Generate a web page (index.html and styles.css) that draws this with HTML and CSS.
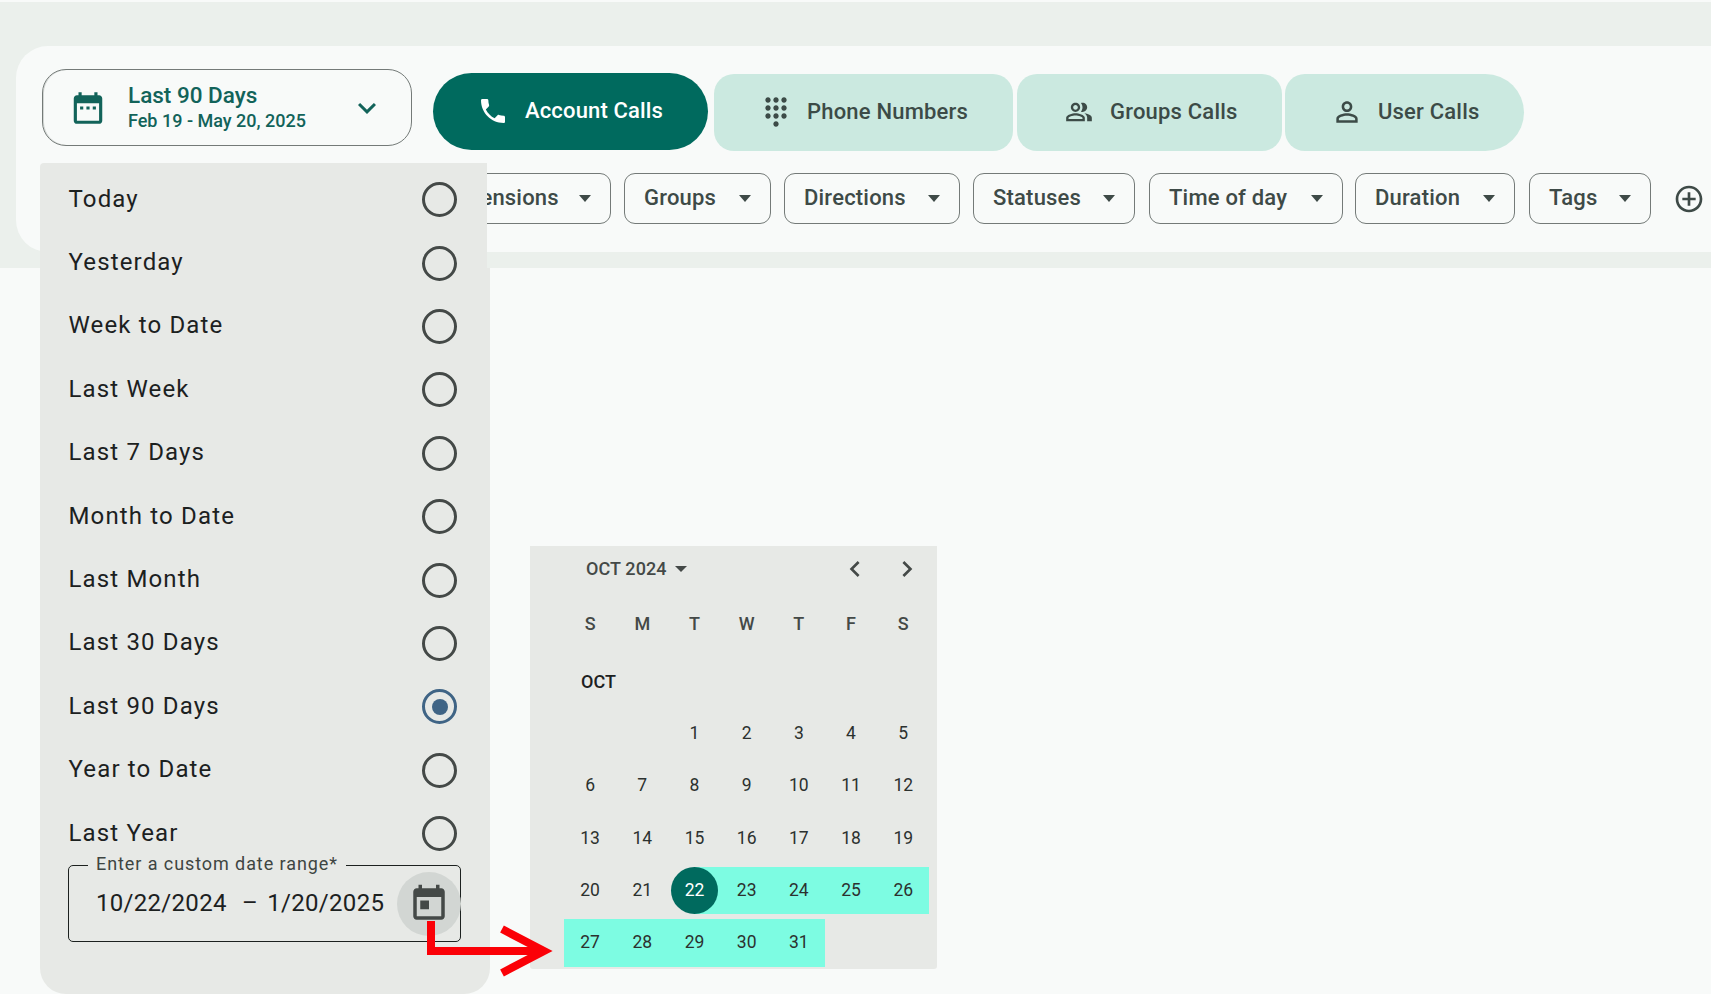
FILE: index.html
```html
<!DOCTYPE html>
<html lang="en">
<head>
    <meta charset="UTF-8">
    <meta name="viewport" content="width=device-width, initial-scale=1.0">
    <title>Account Calls</title>
    <link rel="stylesheet" href="styles.css">
</head>
<body>
    <div class="band">
        <div class="panel">
            <div class="top-row">
                <button class="range-select">
                    <svg class="range-icon" viewBox="0 0 24 24"><path d="M9 11H7v2h2v-2zm4 0h-2v2h2v-2zm4 0h-2v2h2v-2zm2-7h-1V2h-2v2H8V2H6v2H5c-1.11 0-1.99.9-1.99 2L3 20c0 1.1.89 2 2 2h14c1.1 0 2-.9 2-2V6c0-1.1-.9-2-2-2zm0 16H5V9h14v11z"/></svg>
                    <span class="range-text">
                        <span class="range-name">Last 90 Days</span>
                        <span class="range-dates">Feb 19 - May 20, 2025</span>
                    </span>
                    <svg class="range-chevron" viewBox="0 0 24 24"><path d="M16.59 8.59 12 13.17 7.41 8.59 6 10l6 6 6-6z"/></svg>
                </button>
                <div class="tabs">
                    <button class="tab tab-active">
                        <svg viewBox="0 0 24 24"><path d="M6.62 10.79c1.44 2.83 3.76 5.14 6.59 6.59l2.2-2.2c.27-.27.67-.36 1.02-.24 1.12.37 2.33.57 3.57.57.55 0 1 .45 1 1V20c0 .55-.45 1-1 1-9.39 0-17-7.61-17-17 0-.55.45-1 1-1h3.5c.55 0 1 .45 1 1 0 1.25.2 2.45.57 3.57.11.35.03.74-.25 1.02l-2.2 2.2z"/></svg>
                        Account Calls
                    </button>
                    <button class="tab tab-phone">
                        <svg viewBox="0 0 24 24"><path d="M12 19c-1.1 0-2 .9-2 2s.9 2 2 2 2-.9 2-2-.9-2-2-2zM6 1c-1.1 0-2 .9-2 2s.9 2 2 2 2-.9 2-2-.9-2-2-2zm0 6c-1.1 0-2 .9-2 2s.9 2 2 2 2-.9 2-2-.9-2-2-2zm0 6c-1.1 0-2 .9-2 2s.9 2 2 2 2-.9 2-2-.9-2-2-2zm12-8c1.1 0 2-.9 2-2s-.9-2-2-2-2 .9-2 2 .9 2 2 2zm-6 8c-1.1 0-2 .9-2 2s.9 2 2 2 2-.9 2-2-.9-2-2-2zm6 0c-1.1 0-2 .9-2 2s.9 2 2 2 2-.9 2-2-.9-2-2-2zm0-6c-1.1 0-2 .9-2 2s.9 2 2 2 2-.9 2-2-.9-2-2-2zm-6 0c-1.1 0-2 .9-2 2s.9 2 2 2 2-.9 2-2-.9-2-2-2zm0-6c-1.1 0-2 .9-2 2s.9 2 2 2 2-.9 2-2-.9-2-2-2z"/></svg>
                        Phone Numbers
                    </button>
                    <button class="tab tab-groups">
                        <svg viewBox="0 0 24 24"><path d="M16.67 13.13C18.04 14.06 19 15.32 19 17v3h4v-3c0-2.18-3.57-3.47-6.33-3.87zM15 12c2.21 0 4-1.79 4-4s-1.79-4-4-4c-.47 0-.91.1-1.33.24C14.5 5.27 15 6.58 15 8s-.5 2.73-1.33 3.76c.42.14.86.24 1.33.24zM9 12c2.21 0 4-1.79 4-4s-1.79-4-4-4-4 1.79-4 4 1.79 4 4 4zm0-6c1.1 0 2 .9 2 2s-.9 2-2 2-2-.9-2-2 .9-2 2-2zM9 13c-2.67 0-8 1.34-8 4v3h16v-3c0-2.66-5.33-4-8-4zm6 5H3v-.99C3.2 16.29 6.3 15 9 15s5.8 1.29 6 2v1z"/></svg>
                        Groups Calls
                    </button>
                    <button class="tab tab-user">
                        <svg viewBox="0 0 24 24"><path d="M12 5.9c1.16 0 2.1.94 2.1 2.1s-.94 2.1-2.1 2.1S9.9 9.16 9.9 8s.94-2.1 2.1-2.1m0 9c2.97 0 6.1 1.46 6.1 2.1v1.1H5.9V17c0-.64 3.13-2.1 6.1-2.1M12 4C9.79 4 8 5.79 8 8s1.79 4 4 4 4-1.79 4-4-1.79-4-4-4zm0 9c-2.67 0-8 1.34-8 4v3h16v-3c0-2.66-5.33-4-8-4z"/></svg>
                        User Calls
                    </button>
                </div>
            </div>
            <div class="filters">
                <button class="chip chip-ext">Extensions<i></i></button>
                <button class="chip chip-groups">Groups<i></i></button>
                <button class="chip chip-dir">Directions<i></i></button>
                <button class="chip chip-status">Statuses<i></i></button>
                <button class="chip chip-time">Time of day<i></i></button>
                <button class="chip chip-dur">Duration<i></i></button>
                <button class="chip chip-tags">Tags<i></i></button>
                <svg class="add-filter" viewBox="0 0 24 24"><path d="M13 7h-2v4H7v2h4v4h2v-4h4v-2h-4V7zm-1-5C6.48 2 2 6.48 2 12s4.48 10 10 10 10-4.48 10-10S17.52 2 12 2zm0 18c-4.41 0-8-3.59-8-8s3.59-8 8-8 8 3.59 8 8-3.59 8-8 8z"/></svg>
            </div>
        </div>
    </div>

    <div class="range-menu">
        <ul class="range-list">
            <li>Today<span class="radio"></span></li>
            <li>Yesterday<span class="radio"></span></li>
            <li>Week to Date<span class="radio"></span></li>
            <li>Last Week<span class="radio"></span></li>
            <li>Last 7 Days<span class="radio"></span></li>
            <li>Month to Date<span class="radio"></span></li>
            <li>Last Month<span class="radio"></span></li>
            <li>Last 30 Days<span class="radio"></span></li>
            <li>Last 90 Days<span class="radio radio-on"></span></li>
            <li>Year to Date<span class="radio"></span></li>
            <li>Last Year<span class="radio"></span></li>
        </ul>
        <div class="date-field">
            <span class="date-label">Enter a custom date range*</span>
            <span class="date-value">10/22/2024 <span class="date-sep">–</span> 1/20/2025</span>
            <span class="date-toggle">
                <svg viewBox="0 0 24 24"><path d="M19 3h-1V1h-2v2H8V1H6v2H5c-1.11 0-1.99.9-1.99 2L3 19c0 1.1.89 2 2 2h14c1.1 0 2-.9 2-2V5c0-1.1-.9-2-2-2zm0 16H5V8h14v11zM7 10h5v5H7z"/></svg>
            </span>
        </div>
    </div>

    <div class="calendar">
        <div class="cal-head">
            <span class="cal-month">OCT 2024<i></i></span>
            <span class="cal-nav">
                <svg viewBox="0 0 24 24"><path d="M15.41 7.41 14 6l-6 6 6 6 1.41-1.41L10.83 12z"/></svg>
                <svg viewBox="0 0 24 24"><path d="M10 6 8.59 7.41 13.17 12l-4.58 4.59L10 18l6-6z"/></svg>
            </span>
        </div>
        <div class="cal-grid cal-days">
            <span>S</span><span>M</span><span>T</span><span>W</span><span>T</span><span>F</span><span>S</span>
        </div>
        <div class="cal-label">OCT</div>
        <div class="cal-grid">
            <span></span><span></span><span>1</span><span>2</span><span>3</span><span>4</span><span>5</span>
            <span>6</span><span>7</span><span>8</span><span>9</span><span>10</span><span>11</span><span>12</span>
            <span>13</span><span>14</span><span>15</span><span>16</span><span>17</span><span>18</span><span>19</span>
            <span>20</span><span>21</span><span class="start"><b>22</b></span><span class="in">23</span><span class="in">24</span><span class="in">25</span><span class="in">26</span>
            <span class="in">27</span><span class="in">28</span><span class="in">29</span><span class="in">30</span><span class="in">31</span>
        </div>
    </div>

    <svg class="arrow" viewBox="0 0 140 70">
        <path d="M4 0V30H117" fill="none" stroke="#fb0007" stroke-width="8"/>
        <path d="M75 8 117 30 75 52" fill="none" stroke="#fb0007" stroke-width="8"/>
    </svg>
</body>
</html>
```

FILE: styles.css
```css
* {
    margin: 0;
    padding: 0;
    box-sizing: border-box;
    font-family: Roboto, 'Noto Sans', sans-serif;
}

body {
    position: relative;
    height: 994px;
    overflow: hidden;
    background: #f8faf9;
}

button {
    border: none;
    background: none;
}

/* top area */
.band {
    margin-top: 2px;
    padding: 44px 0 16px 16px;
    background: #ebf0ec;
}

.panel {
    height: 206px;
    padding: 23px 0 0 26px;
    background: #f8faf9;
    border-radius: 32px 0 0 32px;
}

.top-row {
    display: flex;
    align-items: flex-start;
}

.range-select {
    display: flex;
    align-items: center;
    width: 370px;
    height: 77px;
    padding: 0 0 0 26px;
    border: 1px solid #747a78;
    border-radius: 24px;
    box-shadow: inset 1px 0 0 #d3d7d5;
    color: #12635a;
    text-align: left;
}

.range-icon {
    width: 38px;
    height: 38px;
    fill: #12635a;
}

.range-text {
    display: flex;
    flex-direction: column;
    width: 224px;
    margin-left: 21px;
}

.range-name {
    margin-top: -1px;
    font-size: 22.5px;
    font-weight: 500;
    line-height: 27px;
}

.range-dates {
    font-size: 18px;
    font-weight: 500;
    line-height: 24px;
}

.range-chevron {
    width: 36px;
    height: 36px;
    margin-left: -3px;
    fill: #12635a;
}

.tabs {
    display: flex;
    align-items: flex-start;
    margin-left: 21px;
}

.tab {
    display: flex;
    align-items: center;
    height: 77px;
    margin-top: 5px;
    padding-bottom: 2px;
    background: #cbe9e0;
    color: #3c4b47;
    font-size: 22px;
    font-weight: 500;
    letter-spacing: 0.2px;
    white-space: nowrap;
}

.tab svg {
    width: 32px;
    height: 32px;
    margin-right: 15px;
    fill: #3c4b47;
}

.tab-active {
    width: 275px;
    margin-top: 4px;
    margin-right: 6px;
    padding-left: 44px;
    border-radius: 39px;
    background: #006a5e;
    color: #fff;
    letter-spacing: 0.15px;
}

.tab-active svg {
    margin-right: 16px;
    fill: #fff;
}

.tab-phone {
    width: 299px;
    margin-right: 4px;
    padding-left: 46px;
    border-radius: 20px;
}

.tab-groups {
    width: 265px;
    margin-right: 3px;
    padding-left: 48px;
    border-radius: 20px;
}

.tab-groups svg {
    width: 28px;
    height: 28px;
    margin-right: 17px;
}

.tab-user {
    width: 239px;
    padding-left: 46px;
    border-radius: 20px 39px 39px 20px;
}

.filters {
    display: flex;
    align-items: center;
    margin: 22px 0 0 387px;
}

.chip {
    display: flex;
    align-items: center;
    justify-content: space-between;
    height: 51px;
    margin-right: 13px;
    padding: 0 19px 2px;
    border: 1px solid #747a78;
    border-radius: 11px;
    color: #3e4a47;
    font-size: 22px;
    font-weight: 500;
    letter-spacing: 0.2px;
    white-space: nowrap;
}

.chip i {
    width: 0;
    height: 0;
    margin-top: 2px;
    border-left: 6px solid transparent;
    border-right: 6px solid transparent;
    border-top: 7px solid #3e4a47;
}

.chip-ext { width: 182px; }
.chip-groups { width: 147px; }
.chip-dir { width: 176px; }
.chip-status { width: 162px; margin-right: 14px; }
.chip-time { width: 194px; margin-right: 12px; }
.chip-dur { width: 160px; margin-right: 14px; }
.chip-tags { width: 122px; margin-right: 0; }

.add-filter {
    width: 32px;
    height: 32px;
    margin-left: 22px;
    fill: #3e4a47;
}

/* preset menu */
.range-menu {
    position: absolute;
    left: 40px;
    top: 163px;
    width: 450px;
    height: 831px;
    padding-top: 4px;
    background: #e7e9e6;
    border-radius: 4px 4px 26px 26px;
    clip-path: polygon(0 0, 447px 0, 447px 105px, 100% 105px, 100% 100%, 0 100%);
}

.range-list {
    list-style: none;
}

.range-list li {
    display: flex;
    align-items: center;
    justify-content: space-between;
    height: 63.4px;
    padding: 0 33px 0 28.5px;
    color: #1c211f;
    font-size: 24px;
    letter-spacing: 1.15px;
}

.radio {
    position: relative;
    top: 1px;
    width: 35px;
    height: 35px;
    border: 3px solid #444947;
    border-radius: 50%;
}

.radio-on {
    border-color: #3f6485;
}

.radio-on::after {
    content: "";
    position: absolute;
    left: 6.5px;
    top: 6.5px;
    width: 16px;
    height: 16px;
    background: #3f6485;
    border-radius: 50%;
}

.date-field {
    position: relative;
    display: flex;
    align-items: center;
    justify-content: space-between;
    width: 393px;
    height: 77px;
    margin: 1px 0 0 28px;
    padding-left: 27px;
    border: 1px solid #1c211f;
    border-radius: 5px;
}

.date-label {
    position: absolute;
    left: 19px;
    top: -13px;
    padding: 0 8px;
    background: #e7e9e6;
    color: #3e4542;
    font-size: 18px;
    line-height: 22px;
    letter-spacing: 0.92px;
}

.date-value {
    margin-top: -2px;
    color: #1c211f;
    font-size: 24px;
    letter-spacing: 0.3px;
    white-space: nowrap;
}

.date-sep {
    margin: 0 3px 0 9px;
}

.date-toggle {
    display: flex;
    align-items: center;
    justify-content: center;
    flex: none;
    width: 64px;
    height: 64px;
    margin-right: -1px;
    background: #d2d6d3;
    border-radius: 50%;
}

.date-toggle svg {
    width: 42px;
    height: 42px;
    fill: #444947;
}

/* calendar popup */
.calendar {
    position: absolute;
    left: 530px;
    top: 546px;
    width: 407px;
    height: 423px;
    background: #e7e9e6;
    border-radius: 0 0 3px 3px;
}

.cal-head {
    display: flex;
    align-items: center;
    justify-content: space-between;
    height: 45px;
    padding: 0 14.5px 0 56px;
}

.cal-month {
    display: flex;
    align-items: center;
    color: #444947;
    font-size: 18px;
    font-weight: 500;
    letter-spacing: 0.1px;
}

.cal-month i {
    width: 0;
    height: 0;
    margin-left: 8px;
    border-left: 6.5px solid transparent;
    border-right: 6.5px solid transparent;
    border-top: 6.5px solid #444947;
}

.cal-nav {
    display: flex;
    gap: 20px;
}

.cal-nav svg {
    width: 32px;
    height: 32px;
    fill: #444947;
}

.cal-grid {
    display: grid;
    grid-template-columns: repeat(7, 52.2px);
    grid-auto-rows: 52.3px;
    margin-left: 34px;
    color: #2c312f;
    font-size: 17.5px;
}

.cal-grid span {
    display: flex;
    align-items: center;
    justify-content: center;
    margin: 2.5px 0;
}

.cal-days {
    margin-top: 6px;
    color: #444947;
    font-size: 18px;
    font-weight: 500;
}

.cal-label {
    height: 57.5px;
    margin-left: 51px;
    padding-top: 1px;
    color: #1c211f;
    font-size: 18px;
    font-weight: 500;
    line-height: 63px;
}

.cal-grid .in {
    margin: 3.5px 0 1.5px;
    padding-bottom: 2px;
    background: #7dfce2;
}

.cal-grid .start {
    margin: 3.5px 0 1.5px;
    background: linear-gradient(to right, transparent 50%, #7dfce2 50%);
}

.cal-grid .start b {
    display: flex;
    align-items: center;
    justify-content: center;
    width: 47px;
    height: 47px;
    padding-bottom: 2px;
    background: #006a5e;
    border-radius: 50%;
    color: #fff;
    font-weight: 400;
}

.arrow {
    position: absolute;
    left: 427px;
    top: 921px;
    width: 140px;
    height: 70px;
}
```
